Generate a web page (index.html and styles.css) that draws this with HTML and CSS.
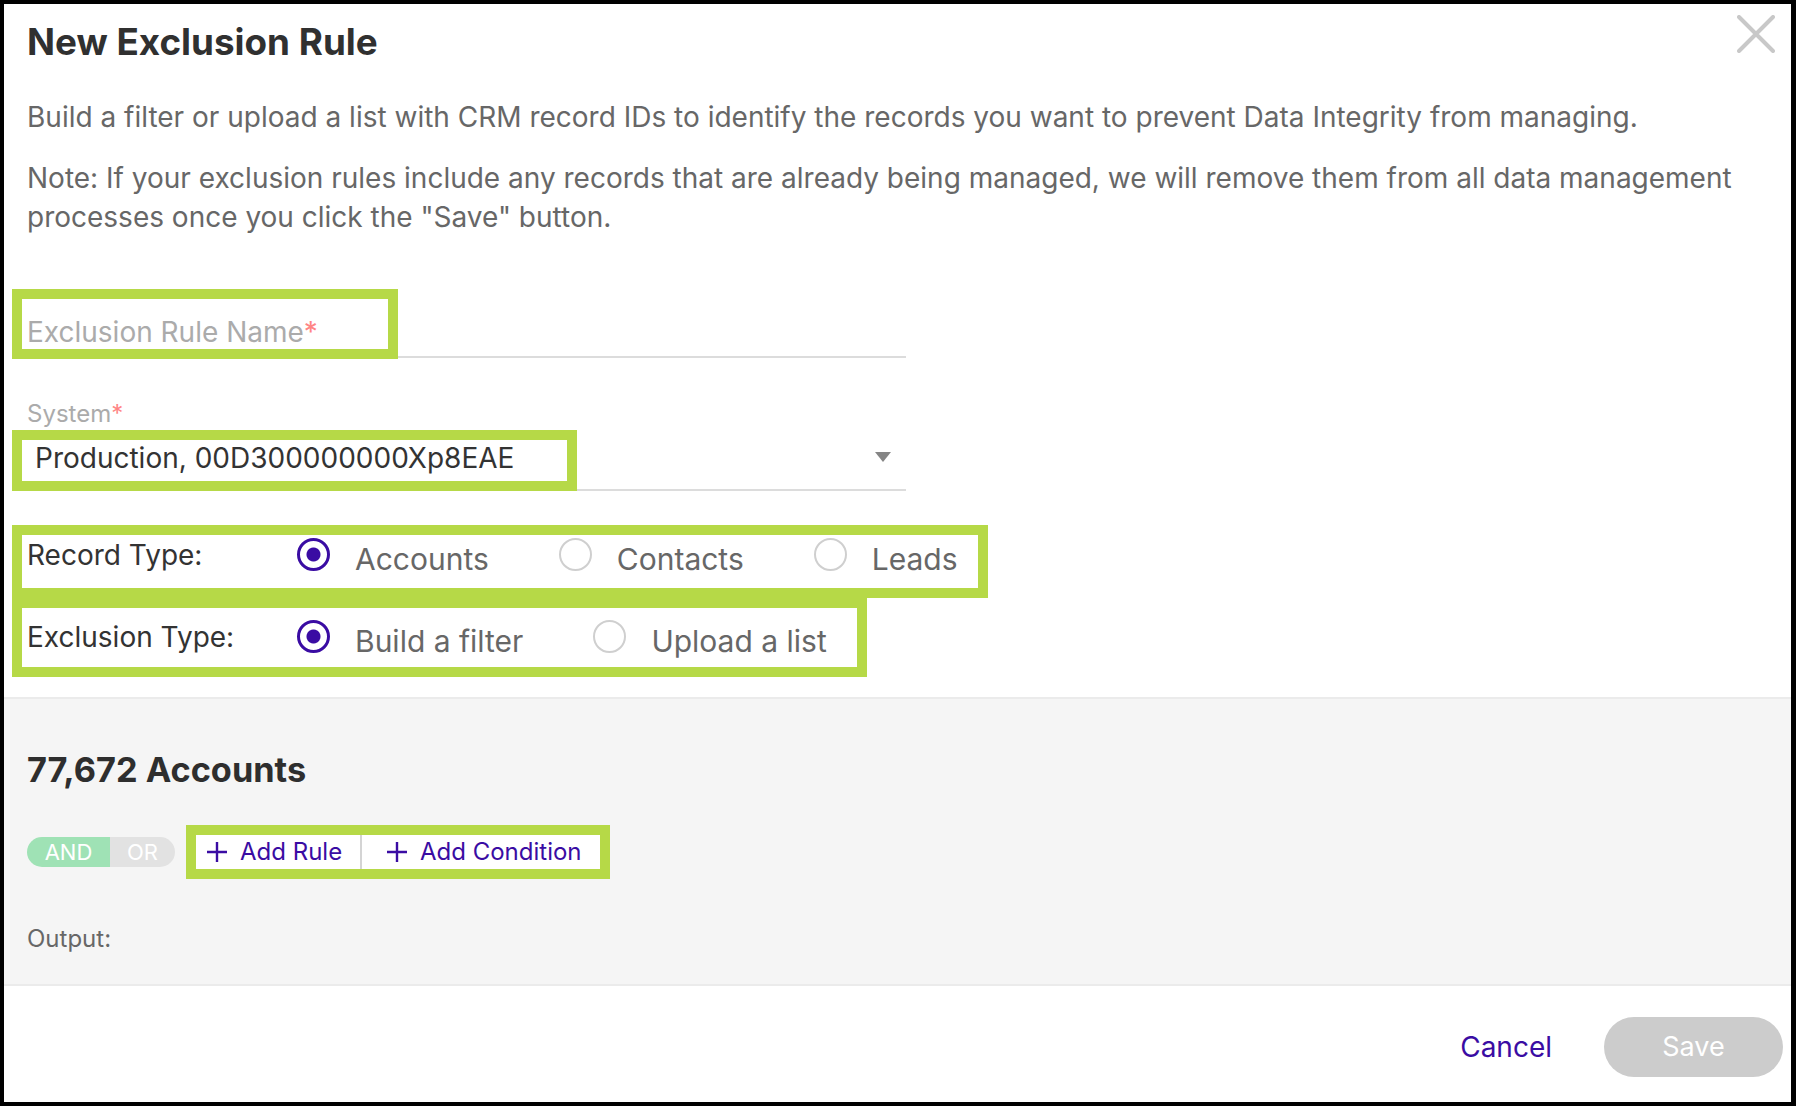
FILE: index.html
```html
<!DOCTYPE html>
<html lang="en">
<head>
<meta charset="utf-8">
<title>New Exclusion Rule</title>
<link rel="stylesheet" href="styles.css">
</head>
<body>
<div class="modal">
  <button class="close" aria-label="Close">
    <svg width="38" height="38" viewBox="0 0 38 38"><path d="M2 2 L36 36 M36 2 L2 36" stroke="#c8c8c8" stroke-width="4" stroke-linecap="round" fill="none"/></svg>
  </button>

  <div class="head">
    <h1 class="title">New Exclusion Rule</h1>
    <p class="lead">Build a filter or upload a list with CRM record IDs to identify the records you want to prevent Data Integrity from managing.</p>
    <p class="note">Note: If your exclusion rules include any records that are already being managed, we will remove them from all data management processes once you click the "Save" button.</p>

    <div class="field field-name">
      <span class="hl name-box">Exclusion Rule Name<span class="req">*</span></span>
    </div>

    <div class="sys-label">System<span class="req">*</span></div>
    <div class="field field-select">
      <span class="hl select-box">Production, 00D300000000Xp8EAE</span>
      <span class="caret"></span>
    </div>

    <div class="hl radio-row row-record">
      <span class="row-label">Record Type:</span>
      <span class="opt"><span class="radio on"></span><span class="opt-text">Accounts</span></span>
      <span class="opt"><span class="radio"></span><span class="opt-text">Contacts</span></span>
      <span class="opt"><span class="radio"></span><span class="opt-text">Leads</span></span>
    </div>
    <div class="hl radio-row row-excl">
      <span class="row-label">Exclusion Type:</span>
      <span class="opt"><span class="radio on"></span><span class="opt-text">Build a filter</span></span>
      <span class="opt"><span class="radio"></span><span class="opt-text">Upload a list</span></span>
    </div>
  </div>

  <div class="filter">
    <h2 class="count">77,672 Accounts</h2>
    <div class="actions">
      <div class="toggle"><span class="seg seg-and">AND</span><span class="seg seg-or">OR</span></div>
      <div class="hl btn-group">
        <span class="add add-rule"><svg class="plus" width="22" height="22" viewBox="0 0 22 22"><path d="M11 1 V21 M1 11 H21" stroke="#3a0ca3" stroke-width="2.4" fill="none"/></svg>Add Rule</span>
        <span class="add add-cond"><svg class="plus" width="22" height="22" viewBox="0 0 22 22"><path d="M11 1 V21 M1 11 H21" stroke="#3a0ca3" stroke-width="2.4" fill="none"/></svg>Add Condition</span>
      </div>
    </div>
    <div class="output">Output:</div>
  </div>

  <div class="footer">
    <span class="cancel">Cancel</span>
    <span class="save">Save</span>
  </div>
</div>
</body>
</html>
```
FILE: styles.css
```css
html, body {
  margin: 0;
  height: 1106px;
}
body {
  background: #000;
  padding: 4px 5px 4px 4px;
  box-sizing: border-box;
  font-family: Inter, "Noto Sans", sans-serif;
  overflow: hidden;
}
.modal {
  position: relative;
  background: #fff;
  height: 1098px;
  display: flex;
  flex-direction: column;
}
.close {
  position: absolute;
  top: 11px;
  right: 16px;
  width: 38px;
  height: 38px;
  padding: 0;
  border: 0;
  background: none;
}
.close svg { display: block; }

.head {
  padding: 16px 40px 30px 23px;
}
.title {
  margin: 0;
  font-size: 36.8px;
  line-height: 44px;
  font-weight: 700;
  color: #303030;
}
.lead, .note {
  margin: 0;
  font-size: 28px;
  line-height: 39.5px;
  color: #676767;
}
.lead { margin-top: 34px; }
.note { margin-top: 21px; }

.hl {
  outline: 10px solid #b6d947;
  background: #fff;
}
.req { color: #ff8585; }

.field {
  width: 879px;
  border-bottom: 2px solid #dcdcdc;
  box-sizing: border-box;
}
.field-name {
  margin-top: 61px;
  padding-bottom: 7px;
}
.name-box {
  display: block;
  width: 366px;
  height: 50px;
  box-sizing: border-box;
  margin-left: -5px;
  padding: 16px 0 0 5px;
  font-size: 28px;
  line-height: 34px;
  color: #ababab;
}
.sys-label {
  margin-top: 41px;
  font-size: 24px;
  line-height: 30px;
  color: #ababab;
}
.field-select {
  margin-top: 11px;
  padding-bottom: 8px;
  display: flex;
  align-items: flex-start;
  justify-content: space-between;
}
.select-box {
  display: block;
  width: 545px;
  height: 41px;
  box-sizing: border-box;
  margin-left: -5px;
  padding-left: 13px;
  font-size: 28px;
  line-height: 36px;
  color: #333;
}
.caret {
  width: 0;
  height: 0;
  margin: 12px 15px 0 0;
  border-left: 8px solid transparent;
  border-right: 8px solid transparent;
  border-top: 10px solid #858585;
}

.radio-row {
  display: flex;
  align-items: flex-start;
  width: fit-content;
  box-sizing: border-box;
  margin-left: -5px;
  padding-left: 5px;
}
.row-record {
  margin-top: 44px;
  height: 53px;
  padding-right: 20px;
}
.row-excl {
  margin-top: 20px;
  height: 59px;
  padding-top: 9px;
  padding-right: 30px;
}
.row-label {
  width: 270px;
  font-size: 28px;
  line-height: 40px;
  color: #333;
}
.opt {
  display: flex;
  align-items: flex-start;
  margin-right: 70px;
}
.opt:last-child { margin-right: 0; }
.radio {
  width: 33px;
  height: 33px;
  margin-top: 3.5px;
  box-sizing: border-box;
  border: 2px solid #cfcfcf;
  border-radius: 50%;
  flex: none;
}
.radio.on {
  border: 3px solid #3a0ca3;
  background: radial-gradient(circle, #3a0ca3 0 6.5px, #fff 7.5px);
}
.opt-text {
  margin-left: 25px;
  padding-top: 4px;
  font-size: 30px;
  line-height: 40px;
  color: #676767;
}

.filter {
  background: #f5f5f5;
  border-top: 2px solid #ebebeb;
  border-bottom: 2px solid #ebebeb;
  padding: 50px 23px 30px;
}
.count {
  margin: 0;
  font-size: 34.3px;
  line-height: 42px;
  font-weight: 700;
  color: #2e2e2e;
}
.actions {
  margin-top: 44px;
  display: flex;
  align-items: center;
}
.toggle {
  display: flex;
  height: 30px;
  border-radius: 15px;
  overflow: hidden;
  font-size: 22px;
  line-height: 30px;
  color: #fff;
}
.seg { text-align: center; }
.seg-and { width: 83px; background: #9fe2b5; }
.seg-or { width: 65px; background: #e2e2e2; }
.btn-group {
  display: flex;
  margin-left: 21px;
  height: 34px;
}
.add {
  display: flex;
  align-items: center;
  gap: 12px;
  font-size: 24px;
  line-height: 34px;
  color: #3a0ca3;
}
.plus { display: block; flex: none; }
.add-rule {
  width: 166px;
  box-sizing: border-box;
  padding-left: 10px;
  border-right: 2px solid #d4d4d4;
}
.add-cond {
  width: 238px;
  box-sizing: border-box;
  padding-left: 24px;
}
.output {
  margin-top: 55px;
  font-size: 24px;
  line-height: 30px;
  color: #676767;
}

.footer {
  flex: 1;
  display: flex;
  justify-content: flex-end;
  align-items: flex-start;
  padding: 31px 8px 0 0;
}
.cancel {
  margin-right: 52px;
  font-size: 28px;
  line-height: 60px;
  color: #3a0ca3;
}
.save {
  width: 179px;
  height: 60px;
  border-radius: 30px;
  background: #cccccc;
  color: #fff;
  font-size: 27px;
  line-height: 60px;
  text-align: center;
}
```
